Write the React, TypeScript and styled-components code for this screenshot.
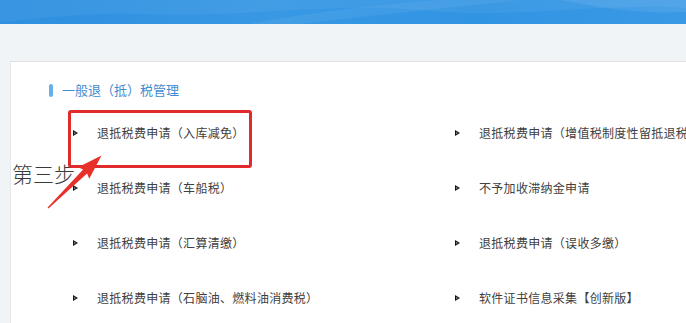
import React from "react";
import styled, { createGlobalStyle } from "styled-components";

const GlobalStyle = createGlobalStyle`
  html, body {
    margin: 0;
    padding: 0;
    background: #f1f4f7;
    overflow: hidden;
  }
  body {
    font-family: "Noto Sans CJK SC", "Noto Sans", sans-serif;
  }
`;

const Page = styled.div`
  position: relative;
  width: 686px;
  height: 323px;
  overflow: hidden;
  background: #f1f4f7;
`;

const Header = styled.div`
  position: relative;
  height: 24px;
  background: linear-gradient(90deg, #2f8fe0 0%, #3898e4 40%, #3194e3 70%, #3a99e5 100%);
  overflow: hidden;
`;

const HeaderWave = styled.svg`
  display: block;
  width: 100%;
  height: 100%;
`;

const Main = styled.div`
  padding: 37px 0 0 10px;
`;

const Panel = styled.div`
  background: #ffffff;
  border-top: 1px solid #dde1e5;
  border-left: 1px solid #e6e9ec;
  width: 720px;
  height: 300px;
  padding: 21px 0 0 38px;
  box-sizing: border-box;
`;

const SectionTitle = styled.div`
  display: flex;
  align-items: center;
  gap: 9px;
  height: 14px;
  font-size: 13px;
  color: #3f8dd2;
  line-height: 14px;
`;

const TitleBar = styled.span`
  width: 4px;
  height: 13px;
  border-radius: 2px;
  background: #69b0ea;
`;

const Grid = styled.div`
  display: grid;
  grid-template-columns: 382px 382px;
  grid-auto-rows: 55px;
  margin-top: 8px;
  padding-left: 24px;
`;

const Item = styled.div`
  display: flex;
  align-items: center;
  gap: 19px;
  font-size: 12px;
  letter-spacing: 0.3px;
  color: #404040;
  white-space: nowrap;
`;

const Bullet = styled.svg`
  flex: none;
  width: 5px;
  height: 6px;
`;

const StepLabel = styled.div`
  position: absolute;
  left: 12px;
  top: 159px;
  font-size: 21px;
  line-height: 28px;
  color: #3a3a3a;
  font-weight: 300;
`;

const Highlight = styled.div`
  position: absolute;
  left: 68px;
  top: 110px;
  width: 184px;
  height: 58px;
  box-sizing: border-box;
  border: 3px solid #e02a2b;
  border-radius: 3px;
`;

const Arrow = styled.svg`
  position: absolute;
  left: 40px;
  top: 150px;
  width: 70px;
  height: 65px;
`;

const items: [string, string][] = [
  ["退抵税费申请（入库减免）", "退抵税费申请（增值税制度性留抵退税）"],
  ["退抵税费申请（车船税）", "不予加收滞纳金申请"],
  ["退抵税费申请（汇算清缴）", "退抵税费申请（误收多缴）"],
  ["退抵税费申请（石脑油、燃料油消费税）", "软件证书信息采集【创新版】"],
];

const BulletIcon = () => (
  <Bullet viewBox="0 0 5 6">
    <polygon points="0,0 5,3 0,6" fill="#111" />
    <polygon points="1,1.6 3,3 1,4.4" fill="#777" />
  </Bullet>
);

export default function App() {
  return (
    <>
      <GlobalStyle />
      <Page>
        <Header>
          <HeaderWave viewBox="0 0 686 24" preserveAspectRatio="none">
            <path d="M0 0 H686 V8 C600 2 520 20 420 10 C330 2 250 18 140 14 C80 12 30 20 0 22 Z" fill="rgba(255,255,255,0.05)" />
            <path d="M250 24 C300 14 360 6 440 0 L520 0 C450 8 360 16 300 24 Z" fill="rgba(255,255,255,0.06)" />
            <path d="M560 0 C600 8 640 14 686 12 V0 Z" fill="rgba(255,255,255,0.08)" />
          </HeaderWave>
        </Header>
        <Main>
          <Panel>
            <SectionTitle>
              <TitleBar />
              一般退（抵）税管理
            </SectionTitle>
            <Grid>
              {items.flatMap(([a, b], i) => [
                <Item key={`l${i}`}>
                  <BulletIcon />
                  {a}
                </Item>,
                <Item key={`r${i}`}>
                  <BulletIcon />
                  {b}
                </Item>,
              ])}
            </Grid>
          </Panel>
        </Main>
        <StepLabel>第三步</StepLabel>
        <Highlight />
        <Arrow viewBox="0 0 70 65">
          <g transform="translate(8 58) rotate(-44.5)">
            <polygon
              points="0,-0.6 52,-2.8 50,-8 75,0 50,8 52,2.8 0,0.6"
              fill="#e8302a"
            />
          </g>
        </Arrow>
      </Page>
    </>
  );
}
